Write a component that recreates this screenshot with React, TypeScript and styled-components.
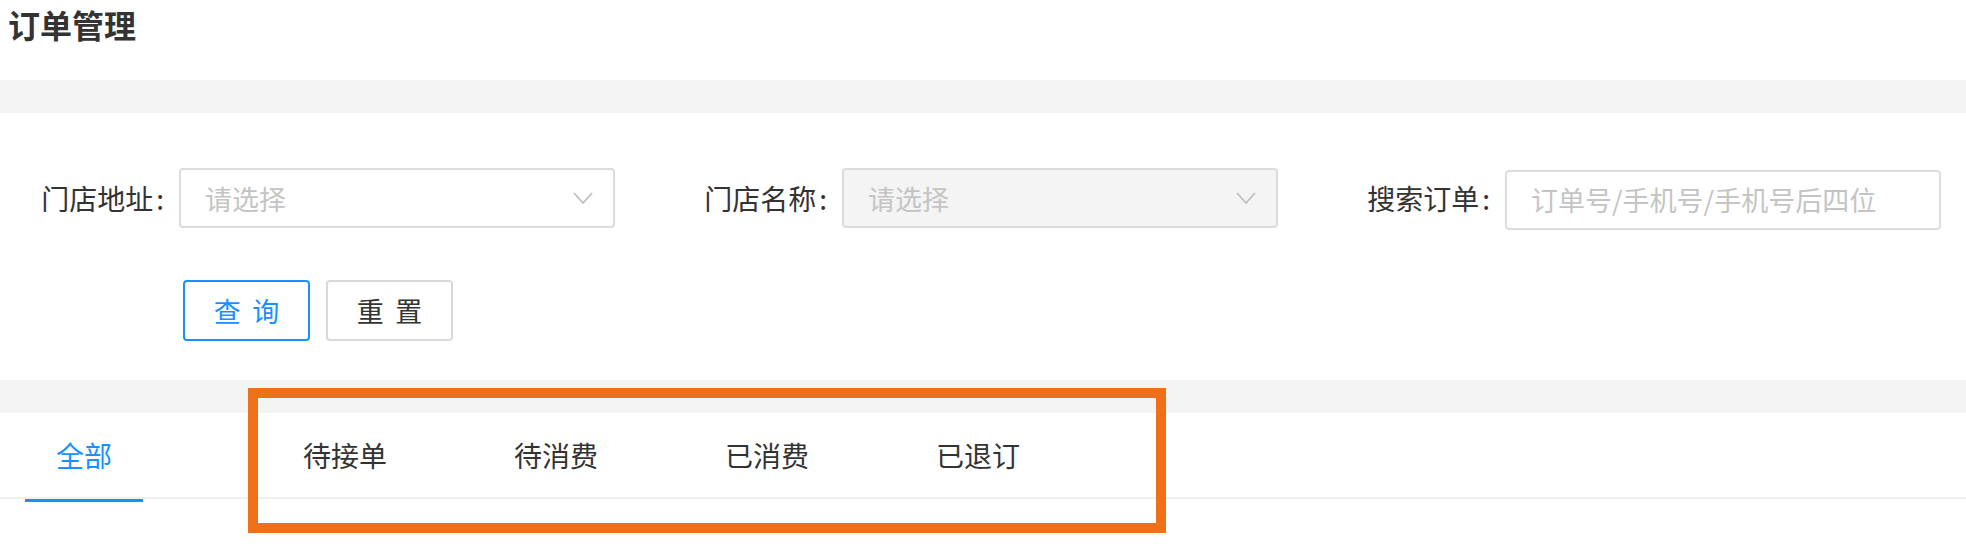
import React from "react";
import styled, { createGlobalStyle, css } from "styled-components";

const Global = createGlobalStyle`
  html, body { margin: 0; padding: 0; background: #fff; }
  body { font-family: "Noto Sans CJK SC", "Noto Sans", sans-serif; color: #333; }
  * { box-sizing: border-box; }
`;

const Page = styled.div`
  position: relative;
  width: 1966px;
  height: 544px;
  overflow: hidden;
  background: #fff;
`;

const Header = styled.header`
  height: 80px;
  padding: 8px 0 0 8px;
`;

const Title = styled.h1`
  margin: 0;
  font-size: 32px;
  line-height: 32px;
  font-weight: 600;
  color: #333;
`;

const Band = styled.div`
  height: 33px;
  background: #f4f4f4;
`;

const FormSection = styled.section`
  padding: 55px 0 39px 0;
`;

const FieldGrid = styled.div`
  display: grid;
  grid-template-columns: repeat(3, 663px);
`;

const Field = styled.div`
  display: flex;
  align-items: center;
  height: 60px;
`;

const Label = styled.label`
  width: 164px;
  margin-right: 15px;
  text-align: right;
  font-size: 28px;
  line-height: 60px;
  color: #333;
  white-space: nowrap;
  &::after {
    content: ":";
    margin-left: 3px;
  }
`;

const controlBase = css`
  width: 436px;
  height: 60px;
  border: 2px solid #dcdcdc;
  border-radius: 4px;
  display: flex;
  align-items: center;
  padding: 0 20px 0 24px;
  font-size: 27px;
  color: #c4c4c4;
`;

const SelectBox = styled.div<{ $disabled?: boolean }>`
  ${controlBase};
  justify-content: space-between;
  background: ${(p) => (p.$disabled ? "#f4f4f4" : "#fff")};
`;

const Placeholder = styled.span`
  white-space: nowrap;
  line-height: 1;
`;

const InputBox = styled.div`
  ${controlBase};
  margin-top: 3px;
  background: #fff;
`;

const ButtonRow = styled.div`
  display: flex;
  gap: 16px;
  padding-left: 183px;
  margin-top: 52px;
`;

const Button = styled.button<{ $primary?: boolean }>`
  width: 127px;
  height: 61px;
  border-radius: 4px;
  background: #fff;
  border: 2px solid ${(p) => (p.$primary ? "#1890ff" : "#d9d9d9")};
  color: ${(p) => (p.$primary ? "#1890ff" : "#333")};
  font-family: inherit;
  font-size: 27px;
  display: flex;
  align-items: center;
  justify-content: center;
  padding: 0;
  & > span {
    letter-spacing: 0.42em;
    margin-right: -0.42em;
  }
`;

const TabNav = styled.nav`
  display: flex;
  padding-left: 25px;
  border-bottom: 2px solid #efefef;
`;

const Tab = styled.div<{ $active?: boolean }>`
  position: relative;
  height: 84px;
  padding: 0 31px;
  display: flex;
  align-items: center;
  font-size: 28px;
  color: ${(p) => (p.$active ? "#1890ff" : "#333")};
  margin-right: ${(p) => (p.$active ? "129px" : "65px")};
  ${(p) =>
    p.$active &&
    css`
      &::after {
        content: "";
        position: absolute;
        left: 0;
        right: 0;
        top: 86px;
        height: 3px;
        background: #1890ff;
      }
    `}
`;

const Highlight = styled.div`
  position: absolute;
  left: 248px;
  top: 388px;
  width: 918px;
  height: 145px;
  border: 10px solid #f0701a;
  pointer-events: none;
`;

const Chevron = () => (
  <svg width="20" height="12" viewBox="0 0 20 12" fill="none">
    <polyline points="1,1 10,11 19,1" stroke="#bfbfbf" strokeWidth="1.8" />
  </svg>
);

export default function App() {
  const tabs = ["全部", "待接单", "待消费", "已消费", "已退订"];
  return (
    <Page>
      <Global />
      <Header>
        <Title>订单管理</Title>
      </Header>
      <Band />
      <FormSection>
        <FieldGrid>
          <Field>
            <Label>门店地址</Label>
            <SelectBox>
              <Placeholder>请选择</Placeholder>
              <Chevron />
            </SelectBox>
          </Field>
          <Field>
            <Label>门店名称</Label>
            <SelectBox $disabled>
              <Placeholder>请选择</Placeholder>
              <Chevron />
            </SelectBox>
          </Field>
          <Field>
            <Label>搜索订单</Label>
            <InputBox>
              <Placeholder>订单号/手机号/手机号后四位</Placeholder>
            </InputBox>
          </Field>
        </FieldGrid>
        <ButtonRow>
          <Button $primary>
            <span>查询</span>
          </Button>
          <Button>
            <span>重置</span>
          </Button>
        </ButtonRow>
      </FormSection>
      <Band />
      <TabNav>
        {tabs.map((t, i) => (
          <Tab key={t} $active={i === 0}>
            {t}
          </Tab>
        ))}
      </TabNav>
      <Highlight />
    </Page>
  );
}
